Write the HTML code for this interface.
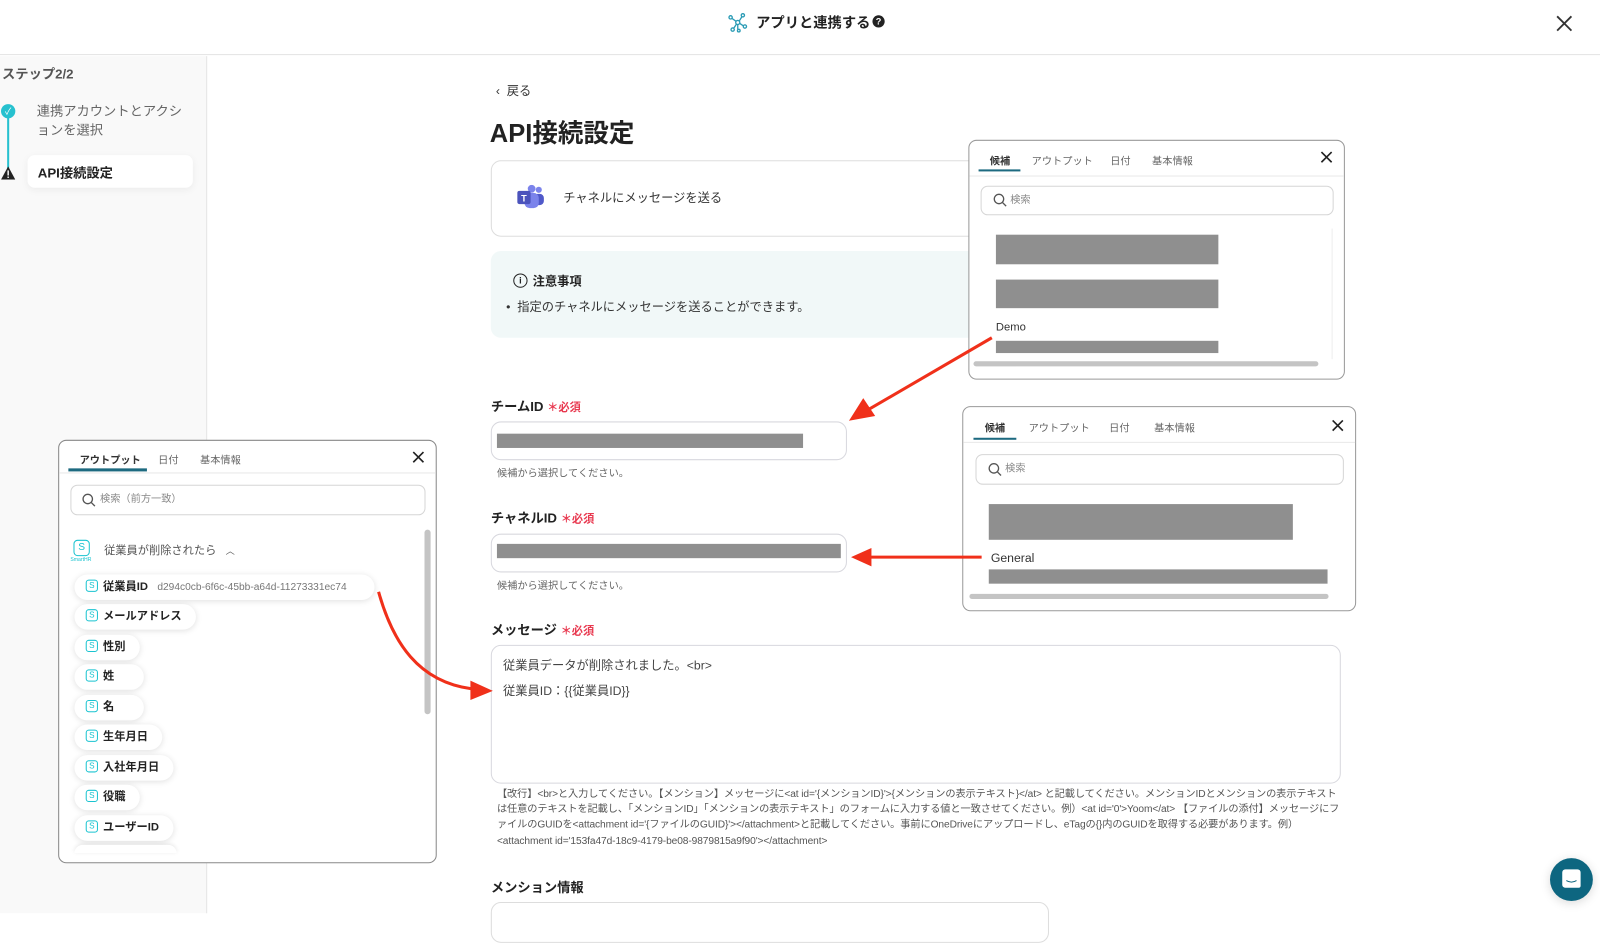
<!DOCTYPE html>
<html><head><meta charset="utf-8">
<style>
*{box-sizing:border-box;margin:0;padding:0}
body{width:1600px;height:910px;overflow:hidden;background:#fff;font-family:"Liberation Sans","Noto Sans CJK JP",sans-serif;color:#222;position:relative}
#w{position:absolute;left:0;top:0;width:1568px;height:892px;transform-origin:0 0;transform:scale(1.020408)}
.a{position:absolute;white-space:nowrap}
.hdr{position:absolute;left:0;top:0;width:1568px;height:54px;border-bottom:1px solid #e4e4e4;background:#fff}
.side{position:absolute;left:0;top:55px;width:203px;height:840px;background:#f9f9f9;border-right:1px solid #e6e6e6}
.box{position:absolute;border:1px solid #ddd;border-radius:10px;background:#fff}
.lbl{font-size:13px;font-weight:bold;color:#222}
.req{color:#e8384f;font-size:11px;font-weight:bold}
.help{font-size:10px;color:#666}
.bar{position:absolute;background:#8f8f8f}
.pop{position:absolute;background:#fff;border:1px solid #999;border-radius:8px;overflow:hidden}
.tab{position:absolute;font-size:10px;color:#666}
.srch{position:absolute;border:1px solid #d6d6d6;border-radius:7px;font-size:10px;color:#888;padding-left:28px}
.pill{position:absolute;left:73px;height:25px;border-radius:13px;background:#fff;box-shadow:0 1px 6px rgba(0,0,0,.13);font-size:11px;font-weight:bold;color:#222;line-height:25px;padding-left:28px;padding-right:14px}
.si{position:absolute;left:11px;top:5px;width:12px;height:12px;border:1.3px solid #19c3d0;border-radius:3px;font-size:8px;color:#19c3d0;line-height:10px;text-align:center;font-weight:normal}
</style></head><body><div id="w">
<div class="hdr"></div>
<svg class="a" style="left:713px;top:12px" width="20" height="20" viewBox="0 0 20 20" fill="none" stroke="#2a9bb5" stroke-width="1.3"><circle cx="10" cy="10" r="2"/><circle cx="15" cy="3" r="1.6"/><circle cx="3" cy="5" r="1.6"/><circle cx="17" cy="14" r="1.6"/><circle cx="5" cy="17" r="1.6"/><circle cx="11" cy="18" r="1.3"/><path d="M11.5 8.5L14 4.5M8.5 9L4.3 6M12 11L15.6 13.4M8.7 11.6L6 15.8M10 12V16.6"/></svg>
<div class="a" style="left:741px;top:12px;font-size:14px;font-weight:bold;color:#222">アプリと連携する</div>
<div class="a" style="left:855px;top:15px;width:12px;height:12px;border-radius:6px;background:#222;color:#fff;font-size:9px;font-weight:bold;text-align:center;line-height:12px">?</div>
<svg class="a" style="left:1524px;top:14px" width="18" height="18" viewBox="0 0 18 18" stroke="#333" stroke-width="1.8"><path d="M2 2L16 16M16 2L2 16"/></svg>

<div class="side"></div>
<div class="a" style="left:2px;top:62px;font-size:13px;font-weight:bold;color:#555">ステップ2/2</div>
<div class="a" style="left:7px;top:112px;width:2px;height:56px;background:#27c1cf"></div>
<div class="a" style="left:1px;top:102px;width:14px;height:14px;border-radius:7px;background:#27c1cf;color:#fff;font-size:9px;text-align:center;line-height:14px">✓</div>
<svg class="a" style="left:1px;top:163px" width="14" height="13" viewBox="0 0 14 13"><path d="M7 0L14 13H0Z" fill="#222"/><rect x="6.3" y="4" width="1.4" height="5" fill="#fff"/><rect x="6.3" y="10" width="1.4" height="1.4" fill="#fff"/></svg>
<div class="a" style="left:36px;top:99px;font-size:13px;color:#666;line-height:19px;white-space:normal;width:145px">連携アカウントとアクションを選択</div>
<div class="a" style="left:27px;top:152px;width:162px;height:32px;background:#fff;border-radius:7px;box-shadow:0 2px 8px rgba(0,0,0,.06);font-size:13px;font-weight:bold;padding:7px 0 0 10px">API接続設定</div>

<div class="a" style="left:486px;top:80px;font-size:12px;color:#333">‹&nbsp; 戻る</div>
<div class="a" style="left:480px;top:111px;font-size:25px;font-weight:bold;color:#222">API接続設定</div>
<div class="box" style="left:481px;top:157px;width:832px;height:75px"></div>
<svg class="a" style="left:506px;top:181px" width="28" height="24" viewBox="0 0 28 24"><circle cx="22" cy="5" r="3" fill="#7b83eb"/><rect x="17" y="9" width="10" height="11" rx="4" fill="#5059c9"/><circle cx="15" cy="4" r="3.8" fill="#7b83eb"/><rect x="8" y="8" width="14" height="15" rx="5" fill="#7b83eb"/><rect x="1" y="6" width="13" height="13" rx="2" fill="#4b53bc"/><text x="7.5" y="16.5" font-size="9" font-weight="bold" fill="#fff" text-anchor="middle" font-family="Liberation Sans">T</text></svg>
<div class="a" style="left:552px;top:185px;font-size:12px;color:#333">チャネルにメッセージを送る</div>
<div class="a" style="left:481px;top:246px;width:832px;height:85px;background:#f1f8f8;border-radius:10px"></div>
<div class="a" style="left:503px;top:268px;width:14px;height:14px;border:1.3px solid #222;border-radius:7px;font-size:9px;text-align:center;line-height:12px;font-weight:bold">i</div>
<div class="a" style="left:522px;top:267px;font-size:12px;font-weight:bold">注意事項</div>
<div class="a" style="left:496px;top:292px;font-size:12px;color:#333">•&nbsp; 指定のチャネルにメッセージを送ることができます。</div>

<div class="a lbl" style="left:481px;top:388px">チームID <span class="req">＊必須</span></div>
<div class="box" style="left:481px;top:413px;width:349px;height:38px;border-color:#d8d8de"></div>
<div class="bar" style="left:487px;top:425px;width:300px;height:14px"></div>
<div class="a help" style="left:487px;top:455px">候補から選択してください。</div>
<div class="a lbl" style="left:481px;top:497px">チャネルID <span class="req">＊必須</span></div>
<div class="box" style="left:481px;top:523px;width:349px;height:38px;border-color:#d8d8de"></div>
<div class="bar" style="left:487px;top:533px;width:337px;height:14px"></div>
<div class="a help" style="left:487px;top:565px">候補から選択してください。</div>
<div class="a lbl" style="left:481px;top:607px">メッセージ <span class="req">＊必須</span></div>
<div class="box" style="left:481px;top:632px;width:833px;height:136px;border-color:#d8d8de"></div>
<div class="a" style="left:493px;top:643px;font-size:12px;color:#444">従業員データが削除されました。&lt;br&gt;</div>
<div class="a" style="left:493px;top:668px;font-size:12px;color:#444">従業員ID：{{従業員ID}}</div>
<div class="a" style="left:487px;top:771px;width:828px;font-size:10px;color:#555;line-height:15.2px;white-space:normal;letter-spacing:-0.1px">【改行】&lt;br&gt;と入力してください。【メンション】メッセージに&lt;at id='{メンションID}'&gt;{メンションの表示テキスト}&lt;/at&gt; と記載してください。メンションIDとメンションの表示テキストは任意のテキストを記載し、「メンションID」「メンションの表示テキスト」のフォームに入力する値と一致させてください。例）&lt;at id='0'&gt;Yoom&lt;/at&gt; 【ファイルの添付】メッセージにファイルのGUIDを&lt;attachment id='{ファイルのGUID}'&gt;&lt;/attachment&gt;と記載してください。事前にOneDriveにアップロードし、eTagの{}内のGUIDを取得する必要があります。例）&lt;attachment id='153fa47d-18c9-4179-be08-9879815a9f90'&gt;&lt;/attachment&gt;</div>
<div class="a lbl" style="left:481px;top:859px">メンション情報</div>
<div class="box" style="left:481px;top:884px;width:547px;height:40px;border-color:#ddd"></div>

<!-- popup 1 -->
<div class="pop" style="left:949px;top:137px;width:369px;height:235px">
<div class="tab" style="left:20px;top:11px;font-weight:bold;color:#333">候補</div>
<div class="a" style="left:9px;top:28px;width:41px;height:2px;background:#1d6a80"></div>
<div class="tab" style="left:61px;top:11px">アウトプット</div>
<div class="tab" style="left:138px;top:11px">日付</div>
<div class="tab" style="left:179px;top:11px">基本情報</div>
<svg class="a" style="left:344px;top:10px" width="12" height="12" stroke="#222" stroke-width="1.6"><path d="M1 1L11 11M11 1L1 11"/></svg>
<div class="a" style="left:0;top:34px;width:369px;height:1px;background:#e8e8e8"></div>
<div class="srch" style="left:11px;top:44px;width:346px;height:29px;line-height:27px">検索</div>
<svg class="a" style="left:23px;top:51px" width="14" height="14" fill="none" stroke="#555" stroke-width="1.3"><circle cx="6" cy="6" r="4.6"/><path d="M9.5 9.5L13 13"/></svg>
<div class="bar" style="left:26px;top:92px;width:218px;height:29px"></div>
<div class="bar" style="left:26px;top:136px;width:218px;height:28px"></div>
<div class="a" style="left:26px;top:177px;font-size:11px;color:#333">Demo</div>
<div class="bar" style="left:26px;top:196px;width:218px;height:12px"></div>
<div class="a" style="left:355px;top:86px;width:1px;height:128px;background:#eee"></div>
<div class="a" style="left:4px;top:216px;width:338px;height:5px;border-radius:3px;background:#c4c4c4"></div>
</div>

<!-- popup 2 -->
<div class="pop" style="left:943px;top:398px;width:386px;height:201px">
<div class="tab" style="left:21px;top:12px;font-weight:bold;color:#333">候補</div>
<div class="a" style="left:10px;top:30px;width:42px;height:2px;background:#1d6a80"></div>
<div class="tab" style="left:64px;top:12px">アウトプット</div>
<div class="tab" style="left:143px;top:12px">日付</div>
<div class="tab" style="left:187px;top:12px">基本情報</div>
<svg class="a" style="left:361px;top:12px" width="12" height="12" stroke="#222" stroke-width="1.6"><path d="M1 1L11 11M11 1L1 11"/></svg>
<div class="a" style="left:0;top:34px;width:386px;height:1px;background:#e8e8e8"></div>
<div class="srch" style="left:12px;top:46px;width:361px;height:30px;line-height:28px">検索</div>
<svg class="a" style="left:24px;top:54px" width="14" height="14" fill="none" stroke="#555" stroke-width="1.3"><circle cx="6" cy="6" r="4.6"/><path d="M9.5 9.5L13 13"/></svg>
<div class="bar" style="left:25px;top:95px;width:298px;height:35px"></div>
<div class="a" style="left:27px;top:141px;font-size:12px;color:#333">General</div>
<div class="bar" style="left:25px;top:159px;width:332px;height:14px"></div>
<div class="a" style="left:6px;top:183px;width:352px;height:5px;border-radius:3px;background:#c4c4c4"></div>
</div>

<!-- popup 3 -->
<div class="pop" style="left:57px;top:431px;width:371px;height:415px;border-color:#888">
<div class="tab" style="left:20px;top:10px;font-weight:bold;color:#333">アウトプット</div>
<div class="a" style="left:9px;top:27px;width:77px;height:3px;background:#1d6a80"></div>
<div class="tab" style="left:97px;top:10px">日付</div>
<div class="tab" style="left:138px;top:10px">基本情報</div>
<svg class="a" style="left:346px;top:10px" width="12" height="12" stroke="#222" stroke-width="1.6"><path d="M1 1L11 11M11 1L1 11"/></svg>
<div class="a" style="left:0;top:31px;width:371px;height:1px;background:#e8e8e8"></div>
<div class="srch" style="left:11px;top:43px;width:348px;height:30px;line-height:28px">検索（前方一致）</div>
<svg class="a" style="left:22px;top:51px" width="14" height="14" fill="none" stroke="#555" stroke-width="1.3"><circle cx="6" cy="6" r="4.6"/><path d="M9.5 9.5L13 13"/></svg>
<div class="a" style="left:14px;top:97px;width:16px;height:16px;border:1.5px solid #19c3d0;border-radius:4px;font-size:10px;color:#19c3d0;text-align:center;line-height:13px">S</div>
<div class="a" style="left:11px;top:114px;font-size:5px;color:#19c3d0">SmartHR</div>
<div class="a" style="left:44px;top:99px;font-size:11px;color:#555">従業員が削除されたら&nbsp;&nbsp; <span style="font-size:9px">︿</span></div>
<div class="a" style="left:358px;top:87px;width:6px;height:181px;border-radius:3px;background:#c4c4c4"></div>
</div>
<div class="pill" style="top:563px;width:294px"><span class="si">S</span>従業員ID&nbsp;&nbsp; <span style="font-weight:normal;color:#777;font-size:10px">d294c0cb-6f6c-45bb-a64d-11273331ec74</span></div>
<div class="pill" style="top:592px"><span class="si">S</span>メールアドレス</div>
<div class="pill" style="top:622px"><span class="si">S</span>性別</div>
<div class="pill" style="top:651px;width:68px"><span class="si">S</span>姓</div>
<div class="pill" style="top:681px;width:68px"><span class="si">S</span>名</div>
<div class="pill" style="top:710px"><span class="si">S</span>生年月日</div>
<div class="pill" style="top:740px"><span class="si">S</span>入社年月日</div>
<div class="pill" style="top:769px"><span class="si">S</span>役職</div>
<div class="pill" style="top:799px"><span class="si">S</span>ユーザーID</div>
<div class="a" style="left:73px;top:828px;width:100px;height:8px;border-radius:8px 8px 0 0;background:#fff;box-shadow:0 -1px 4px rgba(0,0,0,.1)"></div>

<!-- arrows -->
<svg class="a" style="left:0;top:0" width="1568" height="892" fill="none">
<path d="M972 331L850 402" stroke="#f0301a" stroke-width="3"/>
<path d="M834 411L846 392L856 407Z" fill="#f0301a" stroke="#f0301a" stroke-width="2"/>
<path d="M962 546L852 546" stroke="#f0301a" stroke-width="3"/>
<path d="M834 546L854 537L854 555Z" fill="#f0301a"/>
<path d="M371 580C385 630 410 668 462 675" stroke="#f0301a" stroke-width="3"/>
<path d="M483 677L461 667L461 686Z" fill="#f0301a"/>
</svg>

<div class="a" style="left:1519px;top:841px;width:42px;height:42px;border-radius:21px;background:#0d6680;box-shadow:0 2px 10px rgba(0,0,0,.15)"></div>
<div class="a" style="left:1531px;top:852px;width:18px;height:18px;border-radius:3px 3px 2px 3px;background:#fff"></div>
<svg class="a" style="left:1533px;top:858px" width="14" height="8" fill="none" stroke="#0d6680" stroke-width="1"><path d="M2 5Q7 8 12 5"/></svg>
</div></body></html>
